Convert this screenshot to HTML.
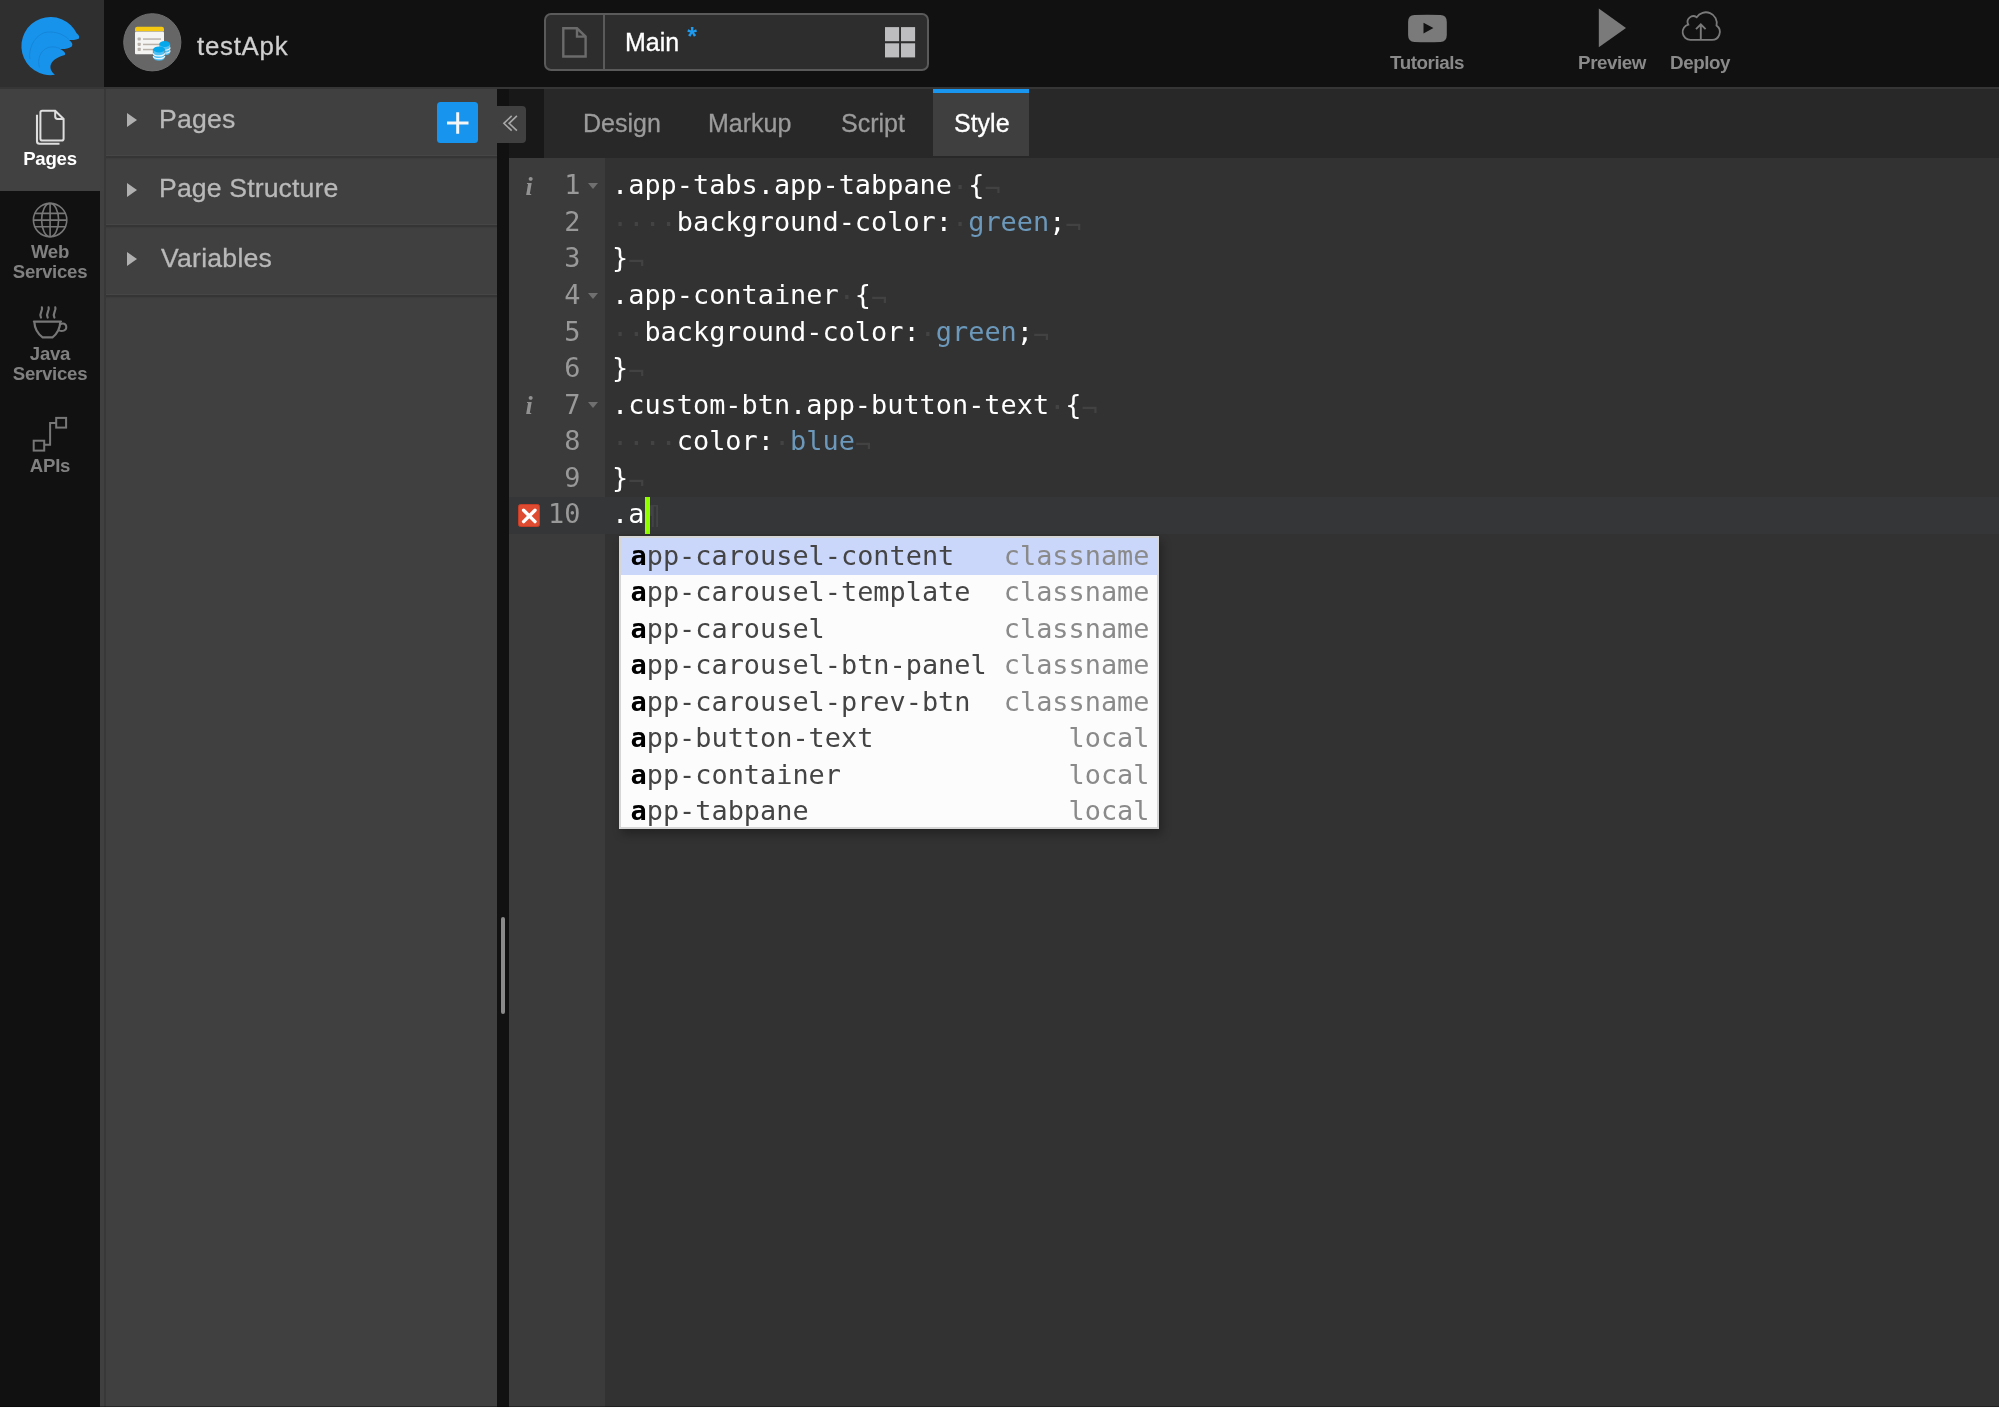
<!DOCTYPE html>
<html lang="en">
<head>
<meta charset="utf-8">
<title>testApk - Studio</title>
<style>
*{box-sizing:border-box;margin:0;padding:0}
html,body{width:1999px;height:1408px;overflow:hidden;background:#323232}
body{position:relative;font-family:"Liberation Sans",sans-serif;color:#b4b4b4}
.abs{position:absolute}
body>div{will-change:transform}
/* top bar */
#topbar{left:0;top:0;width:1999px;height:87px;background:#111}
#topline{left:0;top:87px;width:1999px;height:2px;background:#363636}
#logo{left:0;top:0;width:104px;height:87px;background:#2f2f2f}
#projicon{left:123px;top:14px;width:58px;height:58px;border-radius:50%;background:transparent}
#projname{left:197px;top:28.5px;font-size:25.8px;letter-spacing:.76px;line-height:34px;color:#d0d0d0;white-space:nowrap;-webkit-text-stroke:.3px #d0d0d0}
#pagesel{left:544px;top:13.4px;width:385px;height:57.7px;border:2px solid #5a5a5a;border-radius:7px;background:#2d2d2d}
#pagesel .div{left:57px;top:0;width:2px;height:53.7px;background:#5a5a5a}
#pagename{left:79px;top:9.6px;font-size:25px;line-height:34px;color:#fff;white-space:nowrap;-webkit-text-stroke:.3px}
#pagename b{color:#1d9bf0;font-weight:bold;-webkit-text-stroke:0;position:relative;top:-6px;left:1px}
.tbtn{text-align:center;font-weight:bold;font-size:18.8px;letter-spacing:-.45px;line-height:22px;color:#8a8a8a;white-space:nowrap}
/* sidebar */
#side{left:0;top:89px;width:100px;height:1319px;background:#111}
#sidestrip{left:100px;top:89px;width:6px;height:1319px;background:#404040;border-right:2px solid #383838}
#sideactive{left:0;top:89px;width:104px;height:101.5px;background:#414141}
.slabel{left:0;width:100px;text-align:center;font-weight:bold;font-size:18.6px;letter-spacing:-.25px;line-height:19.7px;color:#808080}
/* panel */
#panel{left:106px;top:89px;width:392px;height:1319px;background:#404040}
.prow{left:106px;width:391.5px;height:3px;background:#353535;border-top:1px solid #464646;box-shadow:0 1px 1px #3c3c3c}
.ptitle{left:158.8px;font-size:26.6px;letter-spacing:.15px;line-height:34px;color:#b9b9b9;white-space:nowrap;-webkit-text-stroke:.3px #b9b9b9}
.parrow{left:127px;width:0;height:0;border-left:10.6px solid #b0b0b0;border-top:7px solid transparent;border-bottom:7px solid transparent}
#addbtn{left:437.4px;top:101.8px;width:40.7px;height:41px;background:#1794ee;border-radius:3.5px}
/* splitter */
#split{left:497px;top:89px;width:12px;height:1319px;background:#111}
#splith{left:501px;top:917px;width:4px;height:97px;background:#8a8a8a;border-radius:2px}
#collapse{left:497px;top:106px;width:29px;height:36.6px;background:#404040;border-radius:0 4px 4px 0}
/* tabs */
#tabgap{left:509px;top:89px;width:35px;height:69px;background:#181818}
#tabbar{left:544px;top:89px;width:1455px;height:69px;background:#282828}
#tabactive{left:933px;top:89px;width:96px;height:67px;background:#3f3f3f;border-top:4px solid #1896f0}
.tab{top:106px;font-size:25px;line-height:34px;color:#9b9b9b;white-space:nowrap;-webkit-text-stroke:.3px}
/* editor */
#gutter{left:509px;top:158px;width:96px;height:1250px;background:#3b3b3b}
#editor{left:605px;top:158px;width:1394px;height:1250px;background:#323232}
#activeline{left:509px;top:497px;width:1490px;height:37px;background:#353637}
.code,.ln,.pop{font-family:"DejaVu Sans Mono","Liberation Mono",monospace;font-size:26.9px;white-space:pre}
.code{left:611.8px;margin-top:-.8px;height:36.575px;line-height:36.575px;color:#fff}
.code i{font-style:normal;color:#434343;position:relative;top:2px}
.code i.e{top:3.5px;color:#424242}
.code u{text-decoration:none;color:#6c99bb}
.ln{left:509px;width:71.5px;margin-top:-.8px;text-align:right;height:36.575px;line-height:36.575px;color:#999}
.fold{left:587.6px;margin-top:1.2px;width:0;height:0;border-top:6px solid #707070;border-left:5.5px solid transparent;border-right:5.5px solid transparent}
.info{left:521.5px;width:14px;font-family:"Liberation Serif",serif;font-style:italic;font-weight:bold;font-size:26px;line-height:36.575px;height:36.575px;margin-top:.8px;color:#929292;text-align:center}
#cursor{left:645.2px;top:497px;width:4.6px;height:37px;background:#91ff00}
#err{left:518px;top:504px;width:22.4px;height:22.8px;background:#df4b30;border-radius:2.5px;border:1px solid #c43e28}
/* popup */
#popup{left:619px;top:536.1px;width:540px;height:292.9px;background:#fcfcfc;border:2px solid #d6d6d6;box-shadow:3px 5px 9px rgba(0,0,0,.3);overflow:hidden}
.pop{left:0;width:536px;height:36.5px;line-height:36.5px;color:#444}
.pop span.l{position:absolute;left:9.5px;top:-.4px}
.pop span.r{position:absolute;right:7.5px;top:-.4px;color:#8a8a8a}
.pop b{color:#000;font-weight:bold}
.pop.sel{background:#cad6fa}
</style>
</head>
<body>
<!-- TOPBAR -->
<div id="topbar" class="abs"></div>
<div id="topline" class="abs"></div>
<div id="logo" class="abs"></div>
<div id="projicon" class="abs"></div>
<div id="projname" class="abs">testApk</div>
<div id="pagesel" class="abs"><div class="div abs"></div><div id="pagename" class="abs">Main <b>*</b></div></div>
<div class="tbtn abs" style="left:1367.3px;top:52.1px;width:120px">Tutorials</div>
<div class="tbtn abs" style="left:1551.5px;top:52.1px;width:120px">Preview</div>
<div class="tbtn abs" style="left:1640px;top:52.1px;width:120px">Deploy</div>

<!-- SIDEBAR -->
<div id="side" class="abs"></div>
<div id="sidestrip" class="abs"></div>
<div id="sideactive" class="abs"></div>
<div class="slabel abs" style="top:149.4px;color:#fff">Pages</div>
<div class="slabel abs" style="top:241.7px">Web<br>Services</div>
<div class="slabel abs" style="top:344px">Java<br>Services</div>
<div class="slabel abs" style="top:455.5px">APIs</div>

<!-- PANEL -->
<div id="panel" class="abs"></div>
<div class="prow abs" style="top:155px"></div>
<div class="prow abs" style="top:224.4px"></div>
<div class="prow abs" style="top:293.8px"></div>
<div class="parrow abs" style="top:113.1px"></div>
<div class="parrow abs" style="top:182.5px"></div>
<div class="parrow abs" style="top:251.9px"></div>
<div class="ptitle abs" style="top:101.7px;left:158.9px;letter-spacing:.2px">Pages</div>
<div class="ptitle abs" style="top:171.1px">Page Structure</div>
<div class="ptitle abs" style="top:240.5px;left:161.3px;letter-spacing:.25px">Variables</div>
<div id="addbtn" class="abs"></div>

<!-- TABS -->
<div id="tabgap" class="abs"></div>
<div id="tabbar" class="abs"></div>
<div id="tabactive" class="abs"></div>
<div class="tab abs" style="left:583.3px">Design</div>
<div class="tab abs" style="left:708px">Markup</div>
<div class="tab abs" style="left:841.3px">Script</div>
<div class="tab abs" style="left:953.5px;color:#fff">Style</div>

<!-- EDITOR -->
<div id="gutter" class="abs"></div>
<div id="editor" class="abs"></div>
<div id="activeline" class="abs"></div>
<div id="split" class="abs"></div>
<div id="splith" class="abs"></div>
<div id="collapse" class="abs"></div>

<div class="ln abs" style="top:168.10px">1</div>
<div class="ln abs" style="top:204.68px">2</div>
<div class="ln abs" style="top:241.25px">3</div>
<div class="ln abs" style="top:277.82px">4</div>
<div class="ln abs" style="top:314.40px">5</div>
<div class="ln abs" style="top:350.98px">6</div>
<div class="ln abs" style="top:387.55px">7</div>
<div class="ln abs" style="top:424.12px">8</div>
<div class="ln abs" style="top:460.70px">9</div>
<div class="ln abs" style="top:497.27px">10</div>
<div class="fold abs" style="top:181.80px"></div>
<div class="fold abs" style="top:291.52px"></div>
<div class="fold abs" style="top:401.25px"></div>
<div class="info abs" style="top:168.10px">i</div>
<div class="info abs" style="top:387.55px">i</div>
<div id="err" class="abs"></div>

<div class="code abs" style="top:168.10px">.app-tabs.app-tabpane<i>·</i>{<i class="e">¬</i></div>
<div class="code abs" style="top:204.68px"><i>····</i>background-color:<i>·</i><u>green</u>;<i class="e">¬</i></div>
<div class="code abs" style="top:241.25px">}<i class="e">¬</i></div>
<div class="code abs" style="top:277.82px">.app-container<i>·</i>{<i class="e">¬</i></div>
<div class="code abs" style="top:314.40px"><i>··</i>background-color:<i>·</i><u>green</u>;<i class="e">¬</i></div>
<div class="code abs" style="top:350.98px">}<i class="e">¬</i></div>
<div class="code abs" style="top:387.55px">.custom-btn.app-button-text<i>·</i>{<i class="e">¬</i></div>
<div class="code abs" style="top:424.12px"><i>····</i>color:<i>·</i><u>blue</u><i class="e">¬</i></div>
<div class="code abs" style="top:460.70px">}<i class="e">¬</i></div>
<div class="code abs" style="top:497.27px">.a<i style="color:#424345">¶</i></div>
<div id="cursor" class="abs"></div>


<!-- ICONS -->
<svg class="abs" style="left:0;top:0;pointer-events:none" width="1999" height="1408" viewBox="0 0 1999 1408" fill="none">
<!-- logo -->
<path d="M79,38.5 C75.5,40 72,40.4 69.1,39.9 C71.6,41.6 73.2,44 71.8,46.4 C68,48.5 64,49.4 60,48.9 C63.2,50.3 66.2,52.6 64.8,55 C58,57 53.5,59.5 51.3,63.5 C49.2,67.5 51,71.5 54.9,74.8 A29.1,29.1 0 1 1 76.8,33.6 Q78.7,34.7 79,36.2 Z" fill="#1893ec"/>
<path d="M29.9,59 C28.5,50 33,37 44,32.8 C52,30.5 62,33 69,39.5" stroke="#1486da" stroke-width="1"/>
<path d="M39.5,67.5 C37,60 40,50 48.6,47.4 C53,46.3 57,47 60,48.6" stroke="#1486da" stroke-width="1"/>
<!-- project icon -->
<circle cx="152.3" cy="42.3" r="28.6" fill="#666" stroke="#6e6e6e" stroke-width="1"/>
<path d="M135,31.3 V29 Q135,26.8 137.2,26.8 H161.8 Q164,26.8 164,29 V31.3 Z" fill="#f5c912"/>
<rect x="135" y="31.5" width="29" height="22.8" rx="1" fill="#f4f4f3"/>
<g fill="#b9b2ab"><rect x="137.6" y="37.4" width="3.2" height="3.2" rx=".8"/><rect x="137.6" y="42.7" width="3.2" height="3.2" rx=".8"/><rect x="137.6" y="47.8" width="3.2" height="3.2" rx=".8"/>
<rect x="143" y="38.3" width="18" height="1.5"/><rect x="143" y="43.7" width="18" height="1.5"/><rect x="143" y="48.8" width="18" height="1.5"/></g>
<g>
<path d="M159.2,44 V52.5 A5.45,2.8 0 0 0 170.1,52.5 V44 Z" fill="#53c1f3"/>
<path d="M159.2,47.6 A5.45,2.6 0 0 0 170.1,47.6 M159.2,50.4 A5.45,2.6 0 0 0 170.1,50.4" stroke="#e8f7fe" stroke-width="1.1"/>
<ellipse cx="164.65" cy="44" rx="5.45" ry="2.9" fill="#05a8ea"/>
<path d="M153.3,49.4 V58 A5.75,2.9 0 0 0 164.8,58 V49.4 Z" fill="#53c1f3" stroke="#666" stroke-width=".6"/>
<path d="M153.3,53.2 A5.75,2.7 0 0 0 164.8,53.2 M153.3,56 A5.75,2.7 0 0 0 164.8,56" stroke="#e8f7fe" stroke-width="1.2"/>
<ellipse cx="159.05" cy="49.4" rx="5.75" ry="3" fill="#05a8ea"/>
</g>
<!-- page selector icons -->
<path d="M563.3,28.3 H577 L585.6,36.6 V56.5 H563.3 Z M577,28.3 V36.6 H585.6" stroke="#6b6b6b" stroke-width="2.4"/>
<g fill="#bdbdbf"><rect x="885" y="27.1" width="14.1" height="14.1"/><rect x="901" y="27.1" width="14.1" height="14.1"/><rect x="885" y="43.3" width="14.1" height="14.1"/><rect x="901" y="43.3" width="14.1" height="14.1"/></g>
<!-- tutorials -->
<path d="M1408.1,22 Q1408.1,15.3 1414.5,15.1 Q1427.4,14.5 1440.4,15.1 Q1446.8,15.3 1446.8,22 V35.1 Q1446.8,41.8 1440.4,42 Q1427.4,42.6 1414.5,42 Q1408.1,41.8 1408.1,35.1 Z" fill="#7a7a7a"/>
<path d="M1423.5,22.7 L1433.4,28.1 L1423.5,33.5 Z" fill="#111"/>
<!-- preview -->
<path d="M1598.8,8.6 L1626,28 L1598.8,47.3 Z" fill="#7a7a7a"/>
<!-- deploy cloud -->
<path d="M1690.5,39.9 H1711.5 A7.9,7.9 0 0 0 1716.5,25.6 A10.9,10.9 0 0 0 1696.7,17.3 A5.7,5.7 0 0 0 1688.3,24.6 A7.8,7.8 0 0 0 1690.5,39.9 Z" stroke="#7a7a7a" stroke-width="1.8"/>
<path d="M1700.8,39.6 V24.8 M1696,29.1 L1700.8,24.4 L1705.6,29.1" stroke="#7a7a7a" stroke-width="1.9"/>
<!-- sidebar: pages -->
<path d="M40.4,112.5 Q40.4,110.7 42.2,110.7 H55.2 L63.6,119 V138.8 Q63.6,140.6 61.8,140.6 H42.2 Q40.4,140.6 40.4,138.8 Z M55.2,110.7 V116.6 Q55.2,119 57.6,119 H63.6" stroke="#dedede" stroke-width="2"/>
<path d="M37,114.8 V141.3 Q37,143.8 39.5,143.8 H59.5" stroke="#dedede" stroke-width="2.1"/>
<!-- sidebar: globe -->
<g stroke="#777" stroke-width="1.6">
<circle cx="50.1" cy="220.1" r="16.7"/>
<ellipse cx="50.1" cy="220.1" rx="8.5" ry="16.7"/>
<path d="M50.1,203.4 V236.8 M33.4,220.1 H66.8 M34.8,213.4 H65.4 M34.8,226.8 H65.4"/>
</g>
<!-- sidebar: java cup -->
<g stroke="#777" stroke-width="2.2" stroke-linecap="round" stroke-linejoin="round">
<path d="M33.9,321.6 H61 M34.3,321.8 C34.6,328 38,334 42.6,337.3 H52.5 C57,334 60,328 60.3,321.8"/>
<path d="M60.6,324.1 C62.5,322.7 66.4,323.4 66.3,327.2 C66.2,330.6 62.3,331.8 59,330.4" stroke-width="2"/>
<path d="M41.9,307.3 C43.3,311 38.6,312.5 41,317.6 M48.6,307.3 C50,311 45.3,312.5 47.7,317.6 M55.3,307.3 C56.7,311 52,312.5 54.4,317.6"/>
</g>
<!-- sidebar: apis -->
<g stroke="#777" stroke-width="2">
<rect x="56.2" y="417.9" width="9.9" height="9.7"/>
<rect x="33.7" y="440.7" width="10.5" height="9.9"/>
<path d="M44.2,444.8 H50.1 V422.9 H56.2"/>
</g>
<!-- add button plus -->
<path d="M447,123 H468.5 M457.7,112.3 V133.8" stroke="#f5f5f5" stroke-width="3"/>
<!-- collapse chevrons -->
<path d="M511.7,115.9 L503.9,123.3 L511.7,130.7 M516.9,115.9 L509.1,123.3 L516.9,130.7" stroke="#a8a8a8" stroke-width="1.6"/>
<!-- error x -->
<path d="M523.6,510.2 L535,521.6 M535,510.2 L523.6,521.6" stroke="#fff" stroke-width="3.4" stroke-linecap="round"/>
</svg>

<div class="abs" style="left:0;top:1405.6px;width:1999px;height:1.4px;background:rgba(0,0,0,.38)"></div>
<div class="abs" style="left:0;top:1407px;width:1999px;height:1px;background:#fafafa"></div>
<!-- POPUP -->
<div id="popup" class="abs">
<div class="pop abs sel" style="top:0"><span class="l"><b>a</b>pp-carousel-content</span><span class="r">classname</span></div>
<div class="pop abs" style="top:36.5px"><span class="l"><b>a</b>pp-carousel-template</span><span class="r">classname</span></div>
<div class="pop abs" style="top:73px"><span class="l"><b>a</b>pp-carousel</span><span class="r">classname</span></div>
<div class="pop abs" style="top:109.5px"><span class="l"><b>a</b>pp-carousel-btn-panel</span><span class="r">classname</span></div>
<div class="pop abs" style="top:146px"><span class="l"><b>a</b>pp-carousel-prev-btn</span><span class="r">classname</span></div>
<div class="pop abs" style="top:182.5px"><span class="l"><b>a</b>pp-button-text</span><span class="r">local</span></div>
<div class="pop abs" style="top:219px"><span class="l"><b>a</b>pp-container</span><span class="r">local</span></div>
<div class="pop abs" style="top:255.5px"><span class="l"><b>a</b>pp-tabpane</span><span class="r">local</span></div>
</div>
</body>
</html>
